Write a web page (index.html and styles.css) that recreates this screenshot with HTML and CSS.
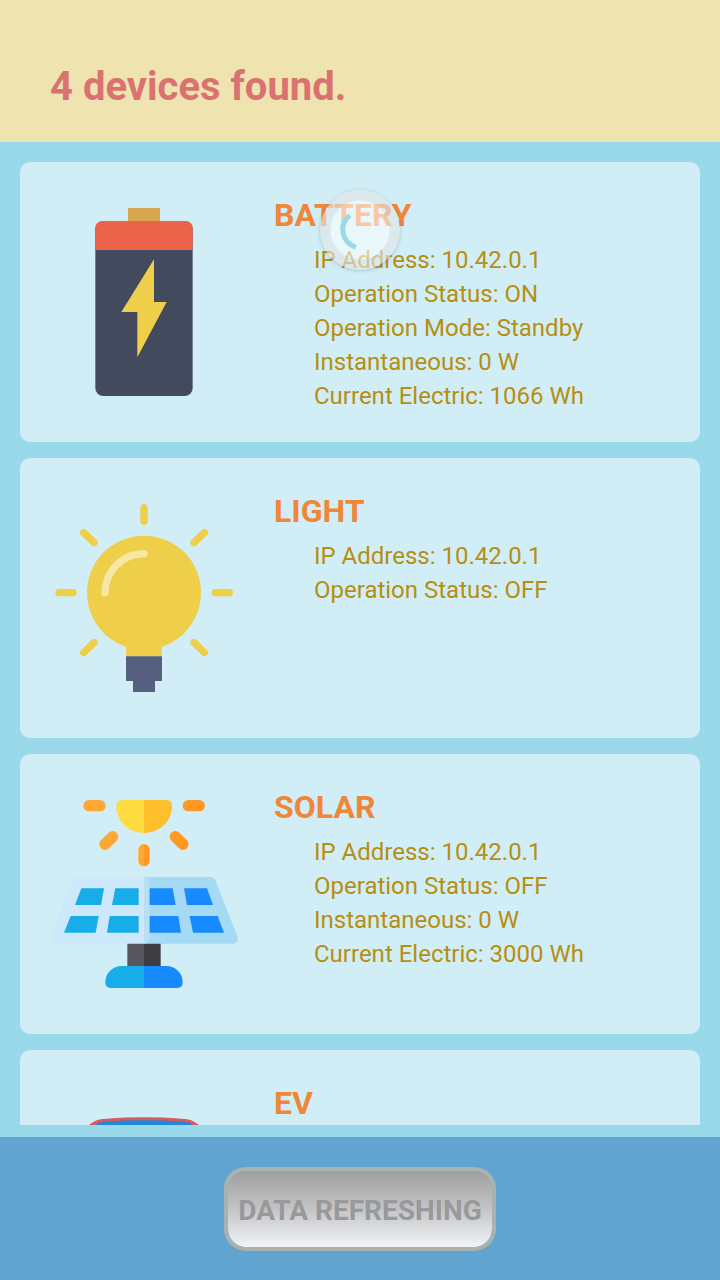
FILE: index.html
```html
<!DOCTYPE html>
<html lang="en">
<head>
<meta charset="utf-8">
<meta name="viewport" content="width=device-width, initial-scale=1">
<title>Devices</title>
<link rel="stylesheet" href="styles.css">
</head>
<body>
<header class="header">
  <h1 class="header-title">4 devices found.</h1>
</header>
<main class="content">
  <div class="refresh" role="status" aria-label="Refreshing">
    <svg class="refresh-arc" viewBox="0 0 80 80" aria-hidden="true"><path class="arc" d="M30 25.500C19 33 20 51 36 57.500"/></svg>
  </div>
  <div class="list">
    <article class="card">
      <svg class="icon" viewBox="30 54 564 564" aria-hidden="true">
        <path fill="#d9a752" d="M264 54h96v42h-96z"/>
        <rect x="166" y="93" width="292" height="525" rx="24" fill="#434a5e"/>
        <path fill="#eb6349" d="M166 180v-63q0-24 24-24h244q24 0 24 24v63z"/>
        <path fill="#efce4a" d="M342 208v128h38l-88 166V366h-48z"/>
      </svg>
      <section class="info">
        <h2 class="name">BATTERY</h2>
        <ul class="details">
          <li>IP Address: 10.42.0.1</li>
          <li>Operation Status: ON</li>
          <li>Operation Mode: Standby</li>
          <li>Instantaneous: 0 W</li>
          <li>Current Electric: 1066 Wh</li>
        </ul>
      </section>
    </article>
    <article class="card">
      <svg class="icon" viewBox="30 42 564 564" aria-hidden="true">
        <circle cx="312" cy="308" r="171" fill="#efce4a"/>
        <path fill="#efce4a" d="M258 450h108v50H258z"/>
        <path fill="#556080" d="M258 499h108v74h-21v33h-66v-33h-21z"/>
        <path fill="none" stroke="#f7e7a4" stroke-width="22" stroke-linecap="round" d="M195 308A117 117 0 0 1 312 191"/>
        <path fill="none" stroke="#efce4a" stroke-width="22" stroke-linecap="round" d="M312 53v41M57 308h42M526 308h42M131 128l31 30M493 128l-31 30M131 488l31-30M493 488l-31-30"/>
      </svg>
      <section class="info">
        <h2 class="name">LIGHT</h2>
        <ul class="details">
          <li>IP Address: 10.42.0.1</li>
          <li>Operation Status: OFF</li>
        </ul>
      </section>
    </article>
    <article class="card">
      <svg class="icon" viewBox="30 60 564 564" aria-hidden="true">
        <path fill="#ffdc40" d="M312 60v99c-48 0-83-36-83-80q0-19 17-19z"/>
        <path fill="#fdbf2b" d="M312 60v99c48 0 84-36 84-80q0-19-17-19z"/>
        <path fill="none" stroke="#ffa733" stroke-width="34" stroke-linecap="round" d="M147 77h33M218 170l-23 23"/>
        <path fill="none" stroke="#ff9924" stroke-width="34" stroke-linecap="round" d="M445 77h33M406 170l23 23"/>
        <path fill="#ffa733" d="M312 192v67a17 17 0 0 1-17-17v-33a17 17 0 0 1 17-17z"/>
        <path fill="#ff9924" d="M312 192v67a17 17 0 0 0 17-17v-33a17 17 0 0 0-17-17z"/>
        <path fill="#57565c" d="M262 488h50v72h-50z"/>
        <path fill="#3e3d42" d="M312 488h50v72h-50z"/>
        <path fill="#18ace9" d="M312 558v66H212q-16 0-16-17c0-28 22-49 49-49z"/>
        <path fill="#188aff" d="M312 558v66h100q16 0 16-17c0-28-22-49-49-49z"/>
        <path fill="#cce8fa" d="M113 291h199v200H47c-13 0-20-12-15-23l66-167q5-10 15-10z"/>
        <path fill="#a5daf5" d="M312 291h199q10 0 15 10l66 167c5 11-2 23-15 23H312z"/>
        <path fill="#b9dff5" d="M312 291q16 2 16 18v164q0 16-16 18z"/>
        <path fill="#18ace9" d="M124 325h68l-9 50h-78zM226 325h70v50h-80zM92 408h84l-9 50H72zM209 408h87v50h-95z"/>
        <path fill="#188aff" d="M329 325h69l9 50h-78zM432 325h69l18 50h-78zM329 408h86l8 50h-94zM449 408h84l19 50h-93z"/>
      </svg>
      <section class="info">
        <h2 class="name">SOLAR</h2>
        <ul class="details">
          <li>IP Address: 10.42.0.1</li>
          <li>Operation Status: OFF</li>
          <li>Instantaneous: 0 W</li>
          <li>Current Electric: 3000 Wh</li>
        </ul>
      </section>
    </article>
    <article class="card">
      <svg class="icon" viewBox="150 168 564 564" aria-hidden="true">
        <path fill="#d75a5f" d="M235 320c8-35 15-51 32-65 14-12 28-18 50-19q115-8 230 0c22 1 36 7 50 19 17 14 24 30 32 65v300H235z"/>
        <path fill="#1e88dc" d="M250 320c8-31 18-51 35-64 12-8 22-11 40-12q107-6 214 0c18 1 28 4 40 12 17 13 27 33 35 64z"/>
      </svg>
      <section class="info">
        <h2 class="name">EV</h2>
      </section>
    </article>
  </div>
</main>
<footer class="footer">
  <button class="refresh-button" type="button" disabled>DATA REFRESHING</button>
</footer>
</body>
</html>
```
FILE: styles.css
```css
* {
  box-sizing: border-box;
}

body {
  display: flex;
  flex-direction: column;
  height: 100vh;
  margin: 0;
  background: #9ad9e9;
  font-family: Roboto, sans-serif;
}

.header {
  flex: none;
  padding: 63px 50px 31px;
  background: #efe3af;
}

.header-title {
  margin: 0;
  color: #da7272;
  font-size: 40px;
  line-height: 48px;
}

.content {
  position: relative;
  display: flex;
  flex: 1;
  min-height: 0;
  padding: 20px 20px 12px;
}

.list {
  display: flex;
  flex: 1;
  flex-direction: column;
  gap: 16px;
  overflow: hidden;
}

.card {
  display: flex;
  flex: none;
  align-items: flex-start;
  gap: 36px;
  min-height: 280px;
  padding: 33px 30px 28px;
  border-radius: 10px;
  background: #d1eef6;
}

.icon {
  flex: none;
  width: 188px;
  height: 188px;
  margin-top: 13px;
}

.info {
  flex: 1;
}

.name {
  margin: 0 0 8px;
  color: #f08639;
  font-size: 32px;
  line-height: 40px;
}

.details {
  margin: 0;
  padding: 0 0 0 40px;
  color: #b58f12;
  font-size: 24px;
  line-height: 34px;
  list-style: none;
}

.refresh {
  position: absolute;
  top: 48px;
  left: 50%;
  z-index: 1;
  width: 80px;
  height: 80px;
  border-radius: 50%;
  background: radial-gradient(circle, rgba(255, 255, 255, 0.55) 29px, rgba(226, 230, 231, 0.6) 30px);
  box-shadow: 0 1px 4px rgba(0, 0, 0, 0.18);
  transform: translateX(-50%);
}

.refresh-arc {
  display: block;
  width: 80px;
  height: 80px;
}

.arc {
  fill: none;
  stroke: #9ad9e9;
  stroke-width: 5px;
}

.footer {
  display: flex;
  flex: none;
  justify-content: center;
  padding: 30px 20px 29px;
  background: #61a4cf;
}

.refresh-button {
  min-height: 84px;
  padding: 4px 10px 0;
  border: 4px solid #aab2b0;
  border-radius: 22px;
  background: linear-gradient(#a09f9f, #c4c4c6 50%, #f0f4f7) padding-box;
  color: #98999b;
  font-family: inherit;
  font-size: 28px;
  font-weight: 700;
  line-height: 32px;
}
```
